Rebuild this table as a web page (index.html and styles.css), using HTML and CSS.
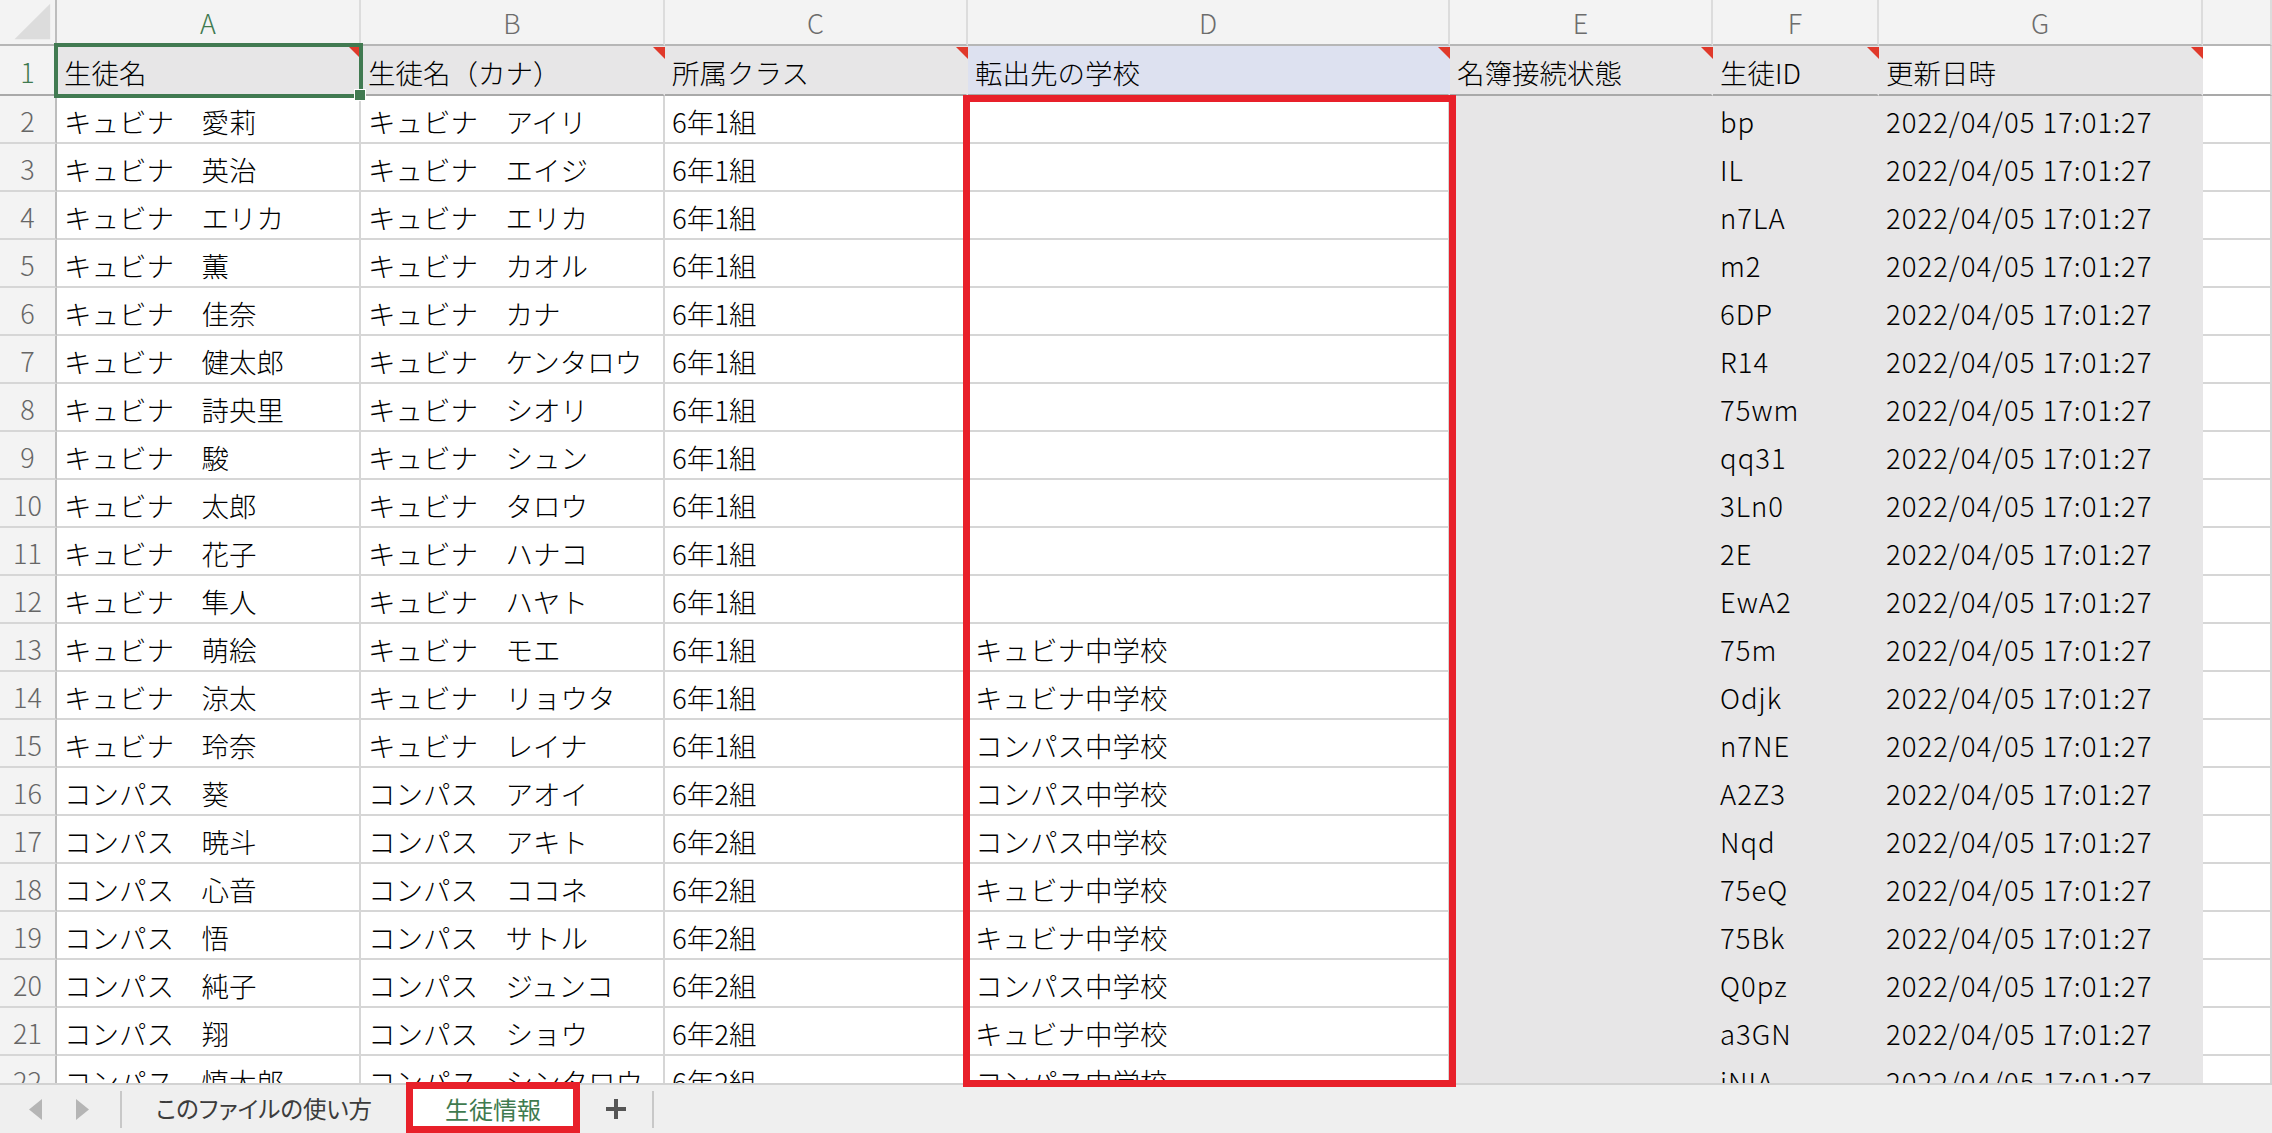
FILE: index.html
```html
<!DOCTYPE html>
<html lang="ja">
<head>
<meta charset="utf-8">
<title>生徒情報</title>
<link rel="stylesheet" href="styles.css">
</head>
<body>
<div class="sheet">
  <div class="grid">
    <div class="cell corner"><svg class="corner-tri" width="57" height="44" viewBox="0 0 57 44"><polygon points="15,40 52,40 52,3" fill="#dcdcdc"/></svg></div>
    <div class="cell ch sel">A</div><div class="cell ch">B</div><div class="cell ch">C</div><div class="cell ch">D</div><div class="cell ch">E</div><div class="cell ch">F</div><div class="cell ch">G</div><div class="cell ch"></div>

    <div class="cell rh r1h">1</div>
    <div class="cell r1 cm">生徒名</div><div class="cell r1 cm">生徒名（カナ）</div><div class="cell r1 cm">所属クラス</div><div class="cell r1 blue cm">転出先の学校</div><div class="cell r1 cm">名簿接続状態</div><div class="cell r1 cm">生徒ID</div><div class="cell r1 cm">更新日時</div><div class="cell r1 empty"></div>

    <div class="cell rh">2</div><div class="cell">キュビナ　愛莉</div><div class="cell">キュビナ　アイリ</div><div class="cell">6年1組</div><div class="cell"></div><div class="cell gr"></div><div class="cell gr lat">bp</div><div class="cell gr lat">2022/04/05 17:01:27</div><div class="cell"></div>
    <div class="cell rh">3</div><div class="cell">キュビナ　英治</div><div class="cell">キュビナ　エイジ</div><div class="cell">6年1組</div><div class="cell"></div><div class="cell gr"></div><div class="cell gr lat">IL</div><div class="cell gr lat">2022/04/05 17:01:27</div><div class="cell"></div>
    <div class="cell rh">4</div><div class="cell">キュビナ　エリカ</div><div class="cell">キュビナ　エリカ</div><div class="cell">6年1組</div><div class="cell"></div><div class="cell gr"></div><div class="cell gr lat">n7LA</div><div class="cell gr lat">2022/04/05 17:01:27</div><div class="cell"></div>
    <div class="cell rh">5</div><div class="cell">キュビナ　薫</div><div class="cell">キュビナ　カオル</div><div class="cell">6年1組</div><div class="cell"></div><div class="cell gr"></div><div class="cell gr lat">m2</div><div class="cell gr lat">2022/04/05 17:01:27</div><div class="cell"></div>
    <div class="cell rh">6</div><div class="cell">キュビナ　佳奈</div><div class="cell">キュビナ　カナ</div><div class="cell">6年1組</div><div class="cell"></div><div class="cell gr"></div><div class="cell gr lat">6DP</div><div class="cell gr lat">2022/04/05 17:01:27</div><div class="cell"></div>
    <div class="cell rh">7</div><div class="cell">キュビナ　健太郎</div><div class="cell">キュビナ　ケンタロウ</div><div class="cell">6年1組</div><div class="cell"></div><div class="cell gr"></div><div class="cell gr lat">R14</div><div class="cell gr lat">2022/04/05 17:01:27</div><div class="cell"></div>
    <div class="cell rh">8</div><div class="cell">キュビナ　詩央里</div><div class="cell">キュビナ　シオリ</div><div class="cell">6年1組</div><div class="cell"></div><div class="cell gr"></div><div class="cell gr lat">75wm</div><div class="cell gr lat">2022/04/05 17:01:27</div><div class="cell"></div>
    <div class="cell rh">9</div><div class="cell">キュビナ　駿</div><div class="cell">キュビナ　シュン</div><div class="cell">6年1組</div><div class="cell"></div><div class="cell gr"></div><div class="cell gr lat">qq31</div><div class="cell gr lat">2022/04/05 17:01:27</div><div class="cell"></div>
    <div class="cell rh">10</div><div class="cell">キュビナ　太郎</div><div class="cell">キュビナ　タロウ</div><div class="cell">6年1組</div><div class="cell"></div><div class="cell gr"></div><div class="cell gr lat">3Ln0</div><div class="cell gr lat">2022/04/05 17:01:27</div><div class="cell"></div>
    <div class="cell rh">11</div><div class="cell">キュビナ　花子</div><div class="cell">キュビナ　ハナコ</div><div class="cell">6年1組</div><div class="cell"></div><div class="cell gr"></div><div class="cell gr lat">2E</div><div class="cell gr lat">2022/04/05 17:01:27</div><div class="cell"></div>
    <div class="cell rh">12</div><div class="cell">キュビナ　隼人</div><div class="cell">キュビナ　ハヤト</div><div class="cell">6年1組</div><div class="cell"></div><div class="cell gr"></div><div class="cell gr lat">EwA2</div><div class="cell gr lat">2022/04/05 17:01:27</div><div class="cell"></div>
    <div class="cell rh">13</div><div class="cell">キュビナ　萌絵</div><div class="cell">キュビナ　モエ</div><div class="cell">6年1組</div><div class="cell">キュビナ中学校</div><div class="cell gr"></div><div class="cell gr lat">75m</div><div class="cell gr lat">2022/04/05 17:01:27</div><div class="cell"></div>
    <div class="cell rh">14</div><div class="cell">キュビナ　涼太</div><div class="cell">キュビナ　リョウタ</div><div class="cell">6年1組</div><div class="cell">キュビナ中学校</div><div class="cell gr"></div><div class="cell gr lat">Odjk</div><div class="cell gr lat">2022/04/05 17:01:27</div><div class="cell"></div>
    <div class="cell rh">15</div><div class="cell">キュビナ　玲奈</div><div class="cell">キュビナ　レイナ</div><div class="cell">6年1組</div><div class="cell">コンパス中学校</div><div class="cell gr"></div><div class="cell gr lat">n7NE</div><div class="cell gr lat">2022/04/05 17:01:27</div><div class="cell"></div>
    <div class="cell rh">16</div><div class="cell">コンパス　葵</div><div class="cell">コンパス　アオイ</div><div class="cell">6年2組</div><div class="cell">コンパス中学校</div><div class="cell gr"></div><div class="cell gr lat">A2Z3</div><div class="cell gr lat">2022/04/05 17:01:27</div><div class="cell"></div>
    <div class="cell rh">17</div><div class="cell">コンパス　暁斗</div><div class="cell">コンパス　アキト</div><div class="cell">6年2組</div><div class="cell">コンパス中学校</div><div class="cell gr"></div><div class="cell gr lat">Nqd</div><div class="cell gr lat">2022/04/05 17:01:27</div><div class="cell"></div>
    <div class="cell rh">18</div><div class="cell">コンパス　心音</div><div class="cell">コンパス　ココネ</div><div class="cell">6年2組</div><div class="cell">キュビナ中学校</div><div class="cell gr"></div><div class="cell gr lat">75eQ</div><div class="cell gr lat">2022/04/05 17:01:27</div><div class="cell"></div>
    <div class="cell rh">19</div><div class="cell">コンパス　悟</div><div class="cell">コンパス　サトル</div><div class="cell">6年2組</div><div class="cell">キュビナ中学校</div><div class="cell gr"></div><div class="cell gr lat">75Bk</div><div class="cell gr lat">2022/04/05 17:01:27</div><div class="cell"></div>
    <div class="cell rh">20</div><div class="cell">コンパス　純子</div><div class="cell">コンパス　ジュンコ</div><div class="cell">6年2組</div><div class="cell">コンパス中学校</div><div class="cell gr"></div><div class="cell gr lat">Q0pz</div><div class="cell gr lat">2022/04/05 17:01:27</div><div class="cell"></div>
    <div class="cell rh">21</div><div class="cell">コンパス　翔</div><div class="cell">コンパス　ショウ</div><div class="cell">6年2組</div><div class="cell">キュビナ中学校</div><div class="cell gr"></div><div class="cell gr lat">a3GN</div><div class="cell gr lat">2022/04/05 17:01:27</div><div class="cell"></div>
    <div class="cell rh">22</div><div class="cell">コンパス　慎太郎</div><div class="cell">コンパス　シンタロウ</div><div class="cell">6年2組</div><div class="cell">コンパス中学校</div><div class="cell gr"></div><div class="cell gr lat">iNIA</div><div class="cell gr lat">2022/04/05 17:01:27</div><div class="cell"></div>
  </div>
</div>

<div class="tabbar">
  <div class="nav">
    <svg width="13" height="21" viewBox="0 0 13 21"><polygon points="13,0 13,21 0,10.5" fill="#b5b5b5"/></svg>
    <svg width="13" height="21" viewBox="0 0 13 21"><polygon points="0,0 0,21 13,10.5" fill="#b5b5b5"/></svg>
  </div>
  <div class="sep"></div>
  <div class="tab">このファイルの使い方</div>
  <div class="tab active">生徒情報</div>
  <div class="plus"><svg width="20" height="20" viewBox="0 0 20 20"><path d="M10 0V20M0 10H20" stroke="#555" stroke-width="4"/></svg></div>
  <div class="sep"></div>
</div>

<div class="selbox"></div>
<div class="selhandle"></div>
<div class="mark mark-d"></div>
<div class="mark mark-tab"></div>
</body>
</html>
```
FILE: styles.css
```css
html, body {
  margin: 0;
  padding: 0;
  background: #ffffff;
  overflow: hidden;
}
body {
  width: 2272px;
  height: 1133px;
  position: relative;
  font-family: "Noto Sans CJK JP", "Noto Sans", sans-serif;
}
.sheet {
  height: 1083px;
  overflow: hidden;
}
.grid {
  display: grid;
  grid-template-columns: 57px 304px 304px 303px 482px 263px 166px 324px 69px;
  grid-template-rows: 46px 50px;
  grid-auto-rows: 48px;
}
.cell {
  box-sizing: border-box;
  border-right: 2px solid #d6d6d6;
  border-bottom: 2px solid #d6d6d6;
  display: flex;
  align-items: center;
  padding: 3px 0 0 7px;
  font-size: 27.5px;
  font-weight: 300;
  color: #000000;
  white-space: nowrap;
  overflow: hidden;
  position: relative;
}
.lat {
  letter-spacing: 1px;
}
.corner {
  background: #f3f3f3;
  padding: 0;
  border-right-color: #bdbdbd;
  border-bottom-color: #b6b6b6;
}
.corner-tri {
  display: block;
}
.ch {
  background: #f3f3f3;
  justify-content: center;
  padding: 0;
  font-size: 27px;
  color: #6c6c6c;
  border-right-color: #dcdcdc;
  border-bottom-color: #b6b6b6;
}
.ch.sel {
  color: #3f7a4f;
}
.rh {
  background: #f3f3f3;
  justify-content: center;
  padding: 3px 0 0 0;
  font-size: 27px;
  color: #666666;
  border-right-color: #bdbdbd;
  border-bottom-color: #d6d6d6;
}
.r1h {
  color: #3f7a4f;
  border-bottom-color: #a9a9a9;
}
.r1 {
  background: #e7e6e7;
  border-right-color: #e7e6e7;
  border-bottom-color: #a9a9a9;
  overflow: visible;
}
.r1.blue {
  background: #dde1f0;
  border-right-color: #dde1f0;
}
.r1.empty {
  background: #ffffff;
  border-right-color: #d6d6d6;
}
.cm::after {
  content: "";
  position: absolute;
  top: 1px;
  right: -2px;
  width: 12px;
  height: 12px;
  background: #e0392b;
  clip-path: polygon(0 0, 100% 0, 100% 100%);
}
.gr {
  background: #e7e6e7;
  border-right-color: #e7e6e7;
  border-bottom-color: #e7e6e7;
}

.tabbar {
  height: 50px;
  box-sizing: border-box;
  border-top: 2px solid #d2d2d2;
  background: #efefef;
  display: flex;
  align-items: center;
  font-feature-settings: "palt";
}
.nav {
  width: 120px;
  display: flex;
  align-items: center;
  gap: 34px;
  padding-left: 29px;
  box-sizing: border-box;
}
.nav svg {
  display: block;
}
.sep {
  width: 2px;
  height: 37px;
  background: #c8c8c8;
}
.tab {
  width: 284px;
  height: 100%;
  display: flex;
  align-items: center;
  justify-content: center;
  font-size: 23.5px;
  color: #3c3c3c;
  padding-bottom: 2px;
  box-sizing: border-box;
}
.tab.active {
  width: 174px;
  background: #ffffff;
  color: #3f7a4f;
  font-size: 24px;
}
.plus {
  width: 72px;
  display: flex;
  justify-content: center;
  align-items: center;
}
.plus svg {
  display: block;
}

.selbox {
  position: absolute;
  left: 54px;
  top: 43px;
  width: 309px;
  height: 55px;
  box-sizing: border-box;
  border: 4px solid #417a51;
}
.selhandle {
  position: absolute;
  left: 355px;
  top: 90px;
  width: 10px;
  height: 10px;
  background: #417a51;
  outline: 1px solid #ffffff;
}
.mark {
  position: absolute;
  box-sizing: border-box;
  border: 7px solid #e8202a;
}
.mark-d {
  left: 963px;
  top: 95px;
  width: 493px;
  height: 992px;
}
.mark-tab {
  left: 406px;
  top: 1082px;
  width: 174px;
  height: 51px;
}
```
